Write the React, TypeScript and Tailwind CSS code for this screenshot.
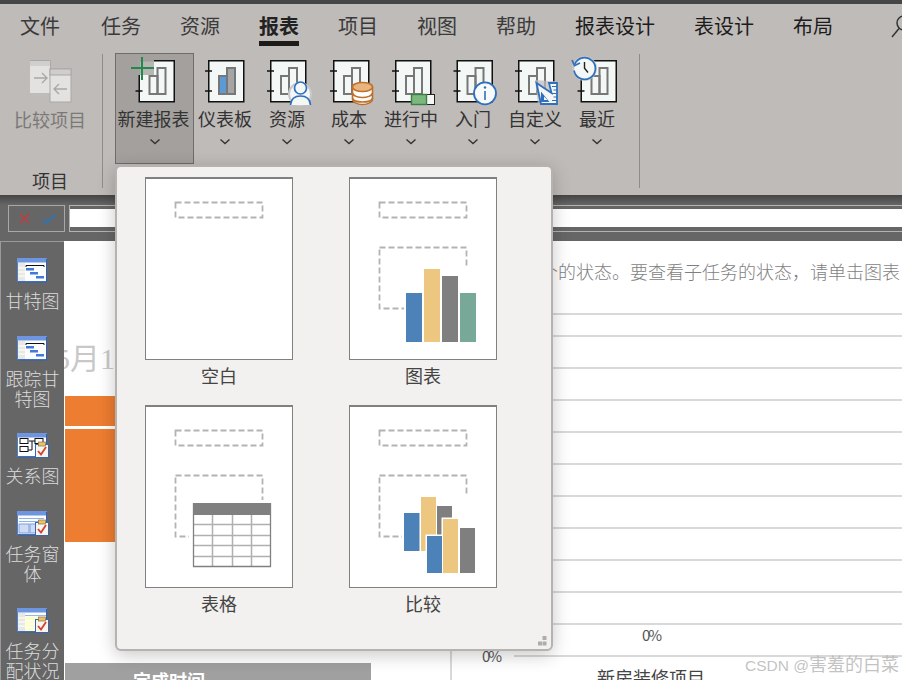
import React from "react";

const FONT = '"Noto Sans CJK SC", "Liberation Sans", sans-serif';
const tabs = ["文件", "任务", "资源", "报表", "项目", "视图", "帮助", "报表设计", "表设计", "布局"];
const lines = [0, 1, 2, 3, 4, 5, 6, 7, 8, 9];

function Base({ dx = 0, ticks = [13, 33], fill = "none", children }: { dx?: number; ticks?: number[]; fill?: string; children?: React.ReactNode }) {
  return (
    <svg width="48" height="50" viewBox="0 0 48 50" className="overflow-visible block">
      <g transform={`translate(${dx} 0)`}>
        <rect x="7.75" y="2.75" width="35" height="41" fill="#f3f7f6" stroke="#111" strokeWidth="1.5" />
        {ticks.map((t) => (
          <path key={t} d={`M4 ${t}H11`} stroke="#111" strokeWidth="1.5" />
        ))}
        <rect x="18" y="18" width="8" height="18" fill={fill} stroke="#777" strokeWidth="2" />
        <rect x="26" y="10" width="8" height="26" fill={fill === "none" ? "none" : "#a5a5a5"} stroke="#777" strokeWidth="2" />
      </g>
      {children}
    </svg>
  );
}

function Btn({ label, icon, active }: { label: string; icon: React.ReactNode; active?: boolean }) {
  return (
    <div className={active ? "w-[79px] h-[111px] flex flex-col items-center pt-[4px] bg-[#a3a09d] border border-[#6f6d6b]" : "w-[62px] h-[111px] flex flex-col items-center pt-[5px]"}>
      {icon}
      <div className={active ? "text-[18px] leading-[22px] text-[#333] whitespace-nowrap -mt-[1px] mr-[2px]" : "text-[18px] leading-[22px] text-[#333] whitespace-nowrap -mt-[1px]"}>{label}</div>
      <svg width="12" height="7" viewBox="0 0 12 7" className="mt-[9px]">
        <path d="M1.5 1.5L6 5.5L10.5 1.5" fill="none" stroke="#333" strokeWidth="1.4" />
      </svg>
    </div>
  );
}

function Thumb({ label, chart = true, children }: { label: string; chart?: boolean; children?: React.ReactNode }) {
  return (
    <div className="flex flex-col items-center w-[148px] h-[228px]">
      <div className="w-[148px] h-[183px] bg-white border border-[#808080] border-t-2 box-border overflow-hidden shrink-0">
        <svg width="148" height="183" viewBox="0 0 148 183" className="block -ml-px -mt-[2px]">
          <rect x="30.5" y="25.5" width="87" height="15" fill="none" stroke="#b3b3b3" strokeWidth="1.8" strokeDasharray="6 3" />
          {chart && <rect x="30.5" y="70.5" width="87" height="61" fill="none" stroke="#b3b3b3" strokeWidth="1.8" strokeDasharray="6 3" />}
          {children}
        </svg>
      </div>
      <div className="text-[18px] leading-[22px] text-[#444] mt-[4px]">{label}</div>
    </div>
  );
}

function SideIcon({ kind }: { kind: string }) {
  return (
    <svg width="32" height="25" viewBox="0 0 32 25" className="block overflow-visible ml-[1px] shrink-0">
      <rect x="0.5" y="0.5" width="29" height="23" fill="#fbfdff" stroke="#4f7fcf" />
      <rect x="0" y="0" width="30" height="4.5" fill="#6e96e0" />
      <path d="M29.5 1V24H1" fill="none" stroke="#2f60b5" strokeWidth="1" />
      {(kind === "gantt" || kind === "track") && (
        <>
          <rect x="1" y="5" width="7" height="18" fill="#e9e9e4" />
          <path d="M1 10H8M1 14H8M1 18H8" stroke="#fff" strokeWidth="1" />
          <path d="M9 7.5H27M9 7.5V9M27 7.5V9" stroke="#111" strokeWidth="1" fill="none" />
          <rect x="9" y="10" width="8" height="2.5" fill="#4479d8" />
          <rect x="13" y="14" width="8" height="2.5" fill="#4479d8" />
          <rect x="19" y="18" width="8" height="2.5" fill="#4479d8" />
        </>
      )}
      {kind === "net" && (
        <>
          <path d="M12 8H19M15 8V17H10" stroke="#111" fill="none" />
          <rect x="3" y="5.5" width="8" height="5" fill="#fff" stroke="#111" />
          <rect x="18" y="5.5" width="8" height="5" fill="#fff" stroke="#111" />
          <rect x="3" y="13.5" width="8" height="5" fill="#fff" stroke="#111" />
        </>
      )}
      {kind === "form" && (
        <>
          <path d="M2 7.5H27M2 10.5H27" stroke="#8fb0e8" />
          <rect x="2" y="13" width="10" height="9" fill="#cfdcf5" stroke="#7f9fdc" />
          <rect x="13" y="13" width="10" height="9" fill="#cfdcf5" stroke="#7f9fdc" />
        </>
      )}
      {kind === "usage" && (
        <>
          <rect x="1" y="5" width="7" height="18" fill="#e9e9e4" />
          <rect x="8" y="9" width="21" height="14" fill="#ffffc8" />
          <path d="M8 12.5H29M8 16H29M8 19.5H29M1 10H8M1 14H8M1 18H8" stroke="#fff" />
          <path d="M8 7.5H29" stroke="#9ab6e8" />
        </>
      )}
      {kind !== "gantt" && kind !== "track" && (
        <>
          <rect x="18.5" y="11.5" width="13" height="13" fill="#f5f5f2" stroke="#3a65ad" />
          <rect x="21.5" y="9" width="7" height="4" fill="#e9c26a" stroke="#8a7440" strokeWidth="0.7" />
          <path d="M21 18L24 21.5L29 14" fill="none" stroke="#d6402c" strokeWidth="1.8" />
        </>
      )}
    </svg>
  );
}

function SideItem({ kind, label }: { kind: string; label: string[] }) {
  return (
    <div className="flex flex-col items-center shrink-0">
      <SideIcon kind={kind} />
      <div className="mt-[7px] text-[18px] leading-[20px] font-light text-[#dcdcdc] text-center whitespace-nowrap">
        {label.map((l) => (
          <div key={l}>{l}</div>
        ))}
      </div>
    </div>
  );
}

export default function App() {
  return (
    <div className="relative w-[902px] h-[680px] overflow-hidden flex flex-col bg-[#666]" style={{ fontFamily: FONT }}>
      <div className="h-[4px] bg-[#464646] shrink-0" />
      {/* tabs */}
      <div className="h-[42px] shrink-0 bg-[#bfbbb8] flex gap-[39px] pl-[20px]">
        {tabs.map((t, i) => (
          <div key={t} className={i === 1 ? "flex flex-col pt-[10px] whitespace-nowrap ml-[2px]" : "flex flex-col pt-[10px] whitespace-nowrap"}>
            <div className={i === 3 ? "text-[20px] leading-[24px] font-bold text-[#222]" : i >= 7 ? "text-[20px] leading-[24px] text-[#1c1c1c]" : "text-[20px] leading-[24px] text-[#3a3a3a]"}>{t}</div>
            {i === 3 && <div className="h-[5px] bg-[#1d1b1a] mt-[3px]" />}
          </div>
        ))}
        <svg width="14" height="24" viewBox="0 0 14 24" className="overflow-visible mt-[12px] ml-[18px] shrink-0">
          <circle cx="14" cy="7" r="7" fill="none" stroke="#333" strokeWidth="1.5" />
          <path d="M9 12.5L2 21" stroke="#333" strokeWidth="1.5" />
        </svg>
      </div>
      {/* ribbon */}
      <div className="h-[149px] shrink-0 bg-[#bfbbb8] flex items-start">
        <div className="w-[102px] h-[149px] flex flex-col items-center pt-[14px]">
          <svg width="42" height="43" viewBox="0 0 42 43" className="block -ml-[1px] shrink-0">
            <rect x="0" y="0" width="21" height="33" fill="#e3e2e0" />
            <rect x="0" y="0" width="21" height="6" fill="#d0cfcd" />
            <path d="M0 .5H20.5V9" fill="none" stroke="#a9a8a6" />
            <rect x="20" y="9" width="21" height="33" fill="#e3e2e0" stroke="#a9a8a6" />
            <rect x="20" y="9" width="21" height="6" fill="#cfcecc" stroke="#a9a8a6" />
            <path d="M4 18H17M12 13L17 18L12 23" fill="none" stroke="#a9a8a6" strokeWidth="1.4" />
            <path d="M37 29H24M29 24L24 29L29 34" fill="none" stroke="#a9a8a6" strokeWidth="1.4" />
          </svg>
          <div className="text-[18px] leading-[22px] text-[#7b7977] mt-[5px] mr-[2px] whitespace-nowrap">比较项目</div>
          <div className="text-[18px] leading-[22px] text-[#333] mt-[39px] mr-[2px]">项目</div>
        </div>
        <div className="w-px h-[134px] mt-[8px] bg-[#8f8c8a]" />
        <div className="flex items-start ml-[12px] mt-[7px]">
          <Btn
            active
            label="新建报表"
            icon={
              <Base dx={0.5} ticks={[33]}>
                <rect x="7" y="2" width="16" height="15" fill="#b0aeab" opacity="0.9" />
                <path d="M11 -1V22M0 10H23" stroke="#1f8a4c" strokeWidth="2" />
              </Base>
            }
          />
          <Btn label="仪表板" icon={<Base fill="#5b9bd5" />} />
          <Btn
            label="资源"
            icon={
              <Base>
                <circle cx="37" cy="36" r="11" fill="#f3f7f6" stroke="#c9c9c9" strokeWidth="2" />
                <circle cx="37.5" cy="30" r="6" fill="#f3f7f6" stroke="#2f6fbe" strokeWidth="1.7" />
                <path d="M27.5 47C28 41 32 38 37.5 38C43 38 47 41 47.5 47" fill="#f3f7f6" stroke="#2f6fbe" strokeWidth="1.7" />
              </Base>
            }
          />
          <Btn
            label="成本"
            icon={
              <Base dx={1}>
                <path d="M27.5 29V41C27.5 44 32 46.5 37.5 46.5S47.5 44 47.5 41V29" fill="#fff" stroke="#c0702a" strokeWidth="1.6" />
                <ellipse cx="37.5" cy="29" rx="10" ry="4.5" fill="#e9b57e" stroke="#c0702a" strokeWidth="1.6" />
                <path d="M27.5 35C28 38 33 39.5 37.5 39.5S47 38 47.5 35" fill="none" stroke="#c0702a" strokeWidth="1.6" />
                <path d="M27.5 40C28 43 33 44 37.5 44S47 43 47.5 40" fill="none" stroke="#c0702a" strokeWidth="1.6" />
              </Base>
            }
          />
          <Btn
            label="进行中"
            icon={
              <Base dx={1}>
                <rect x="24.5" y="36.5" width="23" height="10" fill="#f5f7f6" stroke="#222" />
                <rect x="24.5" y="36.5" width="15" height="10" fill="#7ab87e" stroke="#3e7d48" strokeWidth="1.4" />
              </Base>
            }
          />
          <Btn
            label="入门"
            icon={
              <Base dx={0.5}>
                <circle cx="36" cy="35.3" r="11" fill="#f8fafa" stroke="#2f6fbe" strokeWidth="1.8" />
                <circle cx="36" cy="29.5" r="1.2" fill="#2f6fbe" />
                <path d="M36 33V42" stroke="#2f6fbe" strokeWidth="1.6" />
              </Base>
            }
          />
          <Btn
            label="自定义"
            icon={
              <Base>
                <path d="M24 22L37 23H47V47H27Z" fill="#bcbcbc" opacity="0.7" />
                <path d="M25.5 25L30 46H46V25H38L40.5 35Z" fill="#f5f7f6" stroke="#2f6fbe" strokeWidth="1.8" />
                <path d="M30 33.5V44H38.5Z" fill="#2f6fbe" />
                <path d="M33 38.5V42H36.5Z" fill="#f5f7f6" />
                <path d="M41 28.5H46M42.5 32H46M41 35.5H46M42.5 39H46M41 42.5H46" stroke="#2f6fbe" />
              </Base>
            }
          />
          <Btn
            label="最近"
            icon={
              <Base dx={0.5} ticks={[33]}>
                <circle cx="11.5" cy="10.3" r="12.5" fill="#c8c8c8" opacity="0.8" />
                <path d="M1.8 6A10.8 10.8 0 1 1 1 12.5" fill="#f3f7f6" stroke="#2f6fbe" strokeWidth="1.7" />
                <path d="M-1 2L1.5 7.5L7 5" fill="none" stroke="#2f6fbe" strokeWidth="1.7" />
                <path d="M11.5 4V10.3L15 14.5" fill="none" stroke="#222" strokeWidth="1.4" />
              </Base>
            }
          />
        </div>
        <div className="w-px h-[134px] mt-[8px] ml-[11px] bg-[#8f8c8a]" />
      </div>
      {/* formula bar */}
      <div className="h-[10px] shrink-0 bg-gradient-to-b from-[#454545] to-[#666]" />
      <div className="h-[27px] shrink-0 flex bg-[#666]">
        <div className="ml-[8px] w-[57px] border border-[#aaa8a6] flex items-center pl-[10px] gap-[12px]">
          <svg width="11" height="11" viewBox="0 0 11 11">
            <path d="M1 1L10 10M10 1L1 10" stroke="#c9383a" strokeWidth="1.4" />
          </svg>
          <svg width="14" height="11" viewBox="0 0 14 11">
            <path d="M1 6L5 10L13 1" fill="none" stroke="#2a75b8" strokeWidth="1.8" />
          </svg>
        </div>
        <div className="ml-[4px] flex-1 border border-[#b5b2af] border-r-0 pt-[3px]">
          <div className="h-[18px] bg-white" />
        </div>
      </div>
      <div className="h-[9px] shrink-0 bg-[#666]" />
      {/* main */}
      <div className="flex-1 min-h-0 flex bg-white">
        <div className="w-[64px] shrink-0 bg-[#666] border-l border-t border-[#9a9a9a] flex flex-col items-center gap-[25.5px] pt-[16px] overflow-hidden">
          <SideItem kind="gantt" label={["甘特图"]} />
          <SideItem kind="track" label={["跟踪甘", "特图"]} />
          <SideItem kind="net" label={["关系图"]} />
          <SideItem kind="form" label={["任务窗", "体"]} />
          <SideItem kind="usage" label={["任务分", "配状况"]} />
        </div>
        <div className="w-[388px] shrink-0 border-r-2 border-[#d9d9d9] flex flex-col overflow-hidden">
          <div className="h-[155px] shrink-0 pt-[98px] pl-[1px]">
            <div className="-ml-[10px] text-[30px] leading-[40px] text-[#c8c8c8] whitespace-nowrap" style={{ fontFamily: '"Liberation Serif", "Noto Sans CJK SC", serif' }}>
              5月1
            </div>
          </div>
          <div className="ml-[1px] h-[30px] shrink-0 bg-[#ed7d31]" />
          <div className="ml-[1px] h-[113px] shrink-0 mt-[3px] bg-[#ed7d31]" />
          <div className="ml-[1px] mt-[121px] w-[306px] h-[40px] shrink-0 bg-[#a0a0a0] pl-[68px] pt-[6px] text-[18px] leading-[22px] font-bold text-white">完成时间</div>
        </div>
        <div className="flex-1 min-w-0 flex flex-col overflow-hidden">
          <div className="mt-[19px] shrink-0 pl-[88px] text-[18px] leading-[22px] font-light text-[#7f7f7f] whitespace-nowrap">个的状态。要查看子任务的状态，请单击图表</div>
          <div className="h-[2px] shrink-0 bg-[#d9d9d9] mt-[31px] ml-[62px]" />
          {lines.map((n) => (
            <div key={n} className={n === 0 ? "h-[2px] shrink-0 bg-[#d9d9d9] mt-[20px] ml-[62px]" : "h-[2px] shrink-0 bg-[#d9d9d9] mt-[30px] ml-[62px]"} />
          ))}
          <div className="h-[30px] shrink-0 pl-[190px] pt-[1px] text-[15px] leading-[18px] text-[#555] -tracking-[2px]">0%</div>
          <div className="flex items-center -mt-[8px] shrink-0">
            <span className="ml-[30px] w-[32px] text-[15px] leading-[18px] text-[#555] -tracking-[2px]">0%</span>
            <div className="flex-1 h-[2px] bg-[#d9d9d9]" />
          </div>
          <div className="pl-[145px] shrink-0 text-[18px] leading-[24px] text-[#444] whitespace-nowrap">新房装修项目</div>
        </div>
      </div>

      {/* dropdown gallery */}
      <div className="absolute left-[115px] top-[165px] w-[438px] h-[486px] bg-[#f2f1ef] border-2 border-[#b5b2af] rounded-[6px] shadow-[0_4px_18px_rgba(0,0,0,0.22)] pl-[28px] pt-[10px] grid grid-cols-[148px_148px] gap-x-[56px] content-start">
        <Thumb label="空白" chart={false} />
        <Thumb label="图表">
          <rect x="55" y="90" width="74" height="77" fill="#fff" />
          <rect x="57" y="116" width="16" height="49" fill="#4c82b8" />
          <rect x="75" y="92" width="16" height="73" fill="#edc77f" />
          <rect x="93" y="99" width="16" height="66" fill="#7f7f7f" />
          <rect x="111" y="116" width="16" height="49" fill="#78a898" />
        </Thumb>
        <Thumb label="表格">
          <rect x="44" y="95" width="86" height="70" fill="#fff" />
          <rect x="48" y="98" width="78" height="64" fill="#fff" />
          <path d="M67.5 110V162M87.5 110V162M106.5 110V162" stroke="#b0b0b0" strokeWidth="1.5" />
          <path d="M48 119.5H126M48 130.5H126M48 140.5H126M48 151.5H126" stroke="#b0b0b0" strokeWidth="1.3" />
          <rect x="48" y="98" width="78" height="12" fill="#808080" />
          <path d="M48.5 98V161.5H125.5V98" fill="none" stroke="#808080" strokeWidth="1.3" />
        </Thumb>
        <Thumb label="比较">
          <rect x="53" y="90" width="75" height="80" fill="#fff" />
          <rect x="55" y="108" width="15.5" height="38" fill="#4c82b8" />
          <rect x="72" y="92" width="15" height="54" fill="#edc77f" />
          <rect x="88" y="101" width="15" height="40" fill="#7f7f7f" />
          <rect x="76.5" y="129.5" width="18" height="40" fill="#fff" />
          <rect x="92.5" y="112.5" width="18" height="57" fill="#fff" />
          <rect x="78" y="131" width="15" height="37" fill="#4c82b8" />
          <rect x="94" y="114" width="15" height="54" fill="#edc77f" />
          <rect x="111" y="123" width="15" height="45" fill="#7f7f7f" />
        </Thumb>
        <svg width="12" height="10" viewBox="0 0 12 10" className="absolute right-[3px] bottom-[3px]">
          <path d="M6.5 0H10.5V4H6.5ZM2 5.5H6V9.5H2ZM6.5 5.5H10.5V9.5H6.5Z" fill="#aeadab" />
        </svg>
      </div>

      {/* watermark */}
      <div className="absolute right-[3px] top-[654px] text-[18px] leading-[22px] text-[#a8a8a8]/70 whitespace-nowrap" style={{ fontFamily: '"Liberation Sans", "Noto Sans CJK SC", sans-serif' }}>
        <span className="text-[15.5px]">CSDN @</span>害羞的白菜
      </div>
    </div>
  );
}
